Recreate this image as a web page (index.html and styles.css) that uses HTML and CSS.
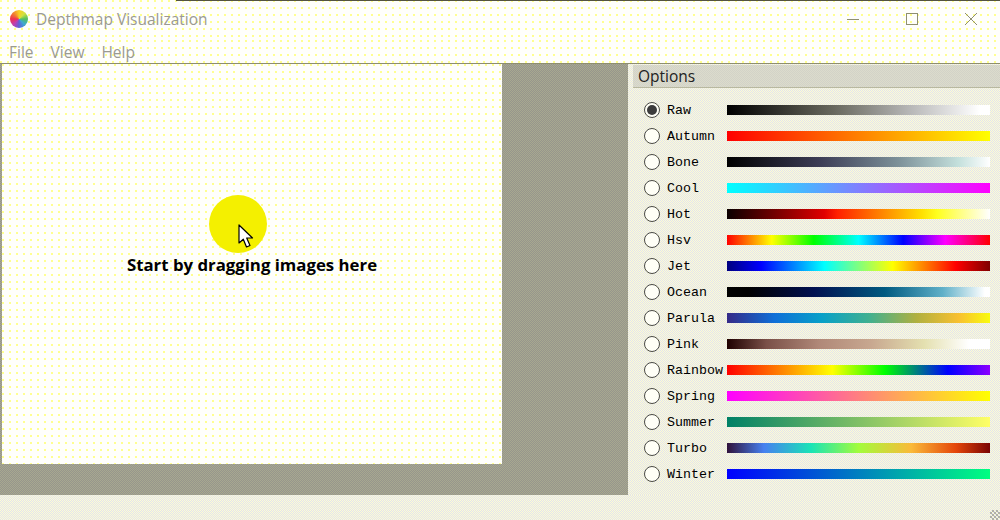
FILE: index.html
```html
<!DOCTYPE html>
<html lang="en">
<head>
<meta charset="utf-8">
<title>Depthmap Visualization</title>
<link rel="stylesheet" href="styles.css">
</head>
<body>
<div class="window">
  <header class="titlebar">
    <span class="app-icon"></span>
    <span class="app-title">Depthmap Visualization</span>
    <div class="win-controls">
      <svg class="win-btn" width="12" height="12" viewBox="0 0 12 12"><path d="M0 6.5H12" stroke="#8f8f70" fill="none"/></svg>
      <svg class="win-btn" width="12" height="12" viewBox="0 0 12 12"><rect x=".5" y=".5" width="11" height="11" stroke="#8f8f70" fill="none"/></svg>
      <svg class="win-btn" width="12" height="12" viewBox="0 0 12 12"><path d="M0 0L12 12M12 0L0 12" stroke="#8f8f70" fill="none"/></svg>
    </div>
  </header>
  <nav class="menubar">
    <span class="menu-item">File</span>
    <span class="menu-item">View</span>
    <span class="menu-item">Help</span>
  </nav>
  <main class="content">
    <section class="viewport">
      <div class="canvas">
        <span class="highlight"></span>
        <svg class="cursor" width="16" height="25" viewBox="0 0 16 25"><path d="M1 1V19L5.300 15.200L8.500 23L12 21.500L8.700 14H14.500Z" fill="#fff" stroke="#000" stroke-width="1.200" stroke-linejoin="round"/></svg>
        <p class="hint">Start by dragging images here</p>
      </div>
    </section>
    <aside class="options">
      <h2 class="options-head">Options</h2>
      <ul class="cmap-list">
        <li class="cmap"><span class="radio checked"></span><span class="cmap-name">Raw</span><span class="bar raw"></span></li>
        <li class="cmap"><span class="radio"></span><span class="cmap-name">Autumn</span><span class="bar autumn"></span></li>
        <li class="cmap"><span class="radio"></span><span class="cmap-name">Bone</span><span class="bar bone"></span></li>
        <li class="cmap"><span class="radio"></span><span class="cmap-name">Cool</span><span class="bar cool"></span></li>
        <li class="cmap"><span class="radio"></span><span class="cmap-name">Hot</span><span class="bar hot"></span></li>
        <li class="cmap"><span class="radio"></span><span class="cmap-name">Hsv</span><span class="bar hsv"></span></li>
        <li class="cmap"><span class="radio"></span><span class="cmap-name">Jet</span><span class="bar jet"></span></li>
        <li class="cmap"><span class="radio"></span><span class="cmap-name">Ocean</span><span class="bar ocean"></span></li>
        <li class="cmap"><span class="radio"></span><span class="cmap-name">Parula</span><span class="bar parula"></span></li>
        <li class="cmap"><span class="radio"></span><span class="cmap-name">Pink</span><span class="bar pink"></span></li>
        <li class="cmap"><span class="radio"></span><span class="cmap-name">Rainbow</span><span class="bar rainbow"></span></li>
        <li class="cmap"><span class="radio"></span><span class="cmap-name">Spring</span><span class="bar spring"></span></li>
        <li class="cmap"><span class="radio"></span><span class="cmap-name">Summer</span><span class="bar summer"></span></li>
        <li class="cmap"><span class="radio"></span><span class="cmap-name">Turbo</span><span class="bar turbo"></span></li>
        <li class="cmap"><span class="radio"></span><span class="cmap-name">Winter</span><span class="bar winter"></span></li>
      </ul>
    </aside>
  </main>
  <footer class="statusbar"><span class="grip"></span></footer>
</div>
</body>
</html>
```
FILE: styles.css
```css
* { box-sizing: border-box; }
html, body { margin: 0; padding: 0; }
body { width: 1000px; height: 520px; overflow: hidden; font-family: "Open Sans", "Noto Sans", sans-serif; }

.window { position: relative; width: 1000px; height: 520px; display: flex; flex-direction: column; }

.titlebar, .menubar, .canvas {
  background-color: #fffffb;
  background-image: radial-gradient(circle at 1px 1px, #ffff90 .8px, transparent .9px);
  background-size: 7px 7px;
}
.titlebar { position: relative; height: 40px; flex: none; display: flex; align-items: center; padding: 0 0 2px 10px; }
.titlebar::before { content: ""; position: absolute; left: 176px; right: 0; top: 0; height: 1px; background: #55553f; }
.app-icon { width: 18px; height: 18px; border-radius: 50%; background: conic-gradient(#f8d020, #d0e040, #50c060, #40a8d0, #6060d8, #c040b0, #f03050, #f08030, #f8d020); }
.app-title { margin-left: 8px; font-size: 15.500px; color: #9a9a92; }
.win-controls { margin-left: auto; display: flex; gap: 47px; padding-right: 23px; }
.win-btn { display: block; }

.menubar { height: 24px; flex: none; display: flex; gap: 17px; padding: 0 0 0 9px; align-items: center; font-size: 15.500px; color: #9a9a92; border-bottom: 1px solid #8e8e6e; }
.menu-item { line-height: 22px; }

.content { flex: 1; display: flex; min-height: 0; }
.viewport { width: 628px; flex: none; padding-left: 2px; background: repeating-conic-gradient(#96968c 0 25%, #a8a890 0 50%) 0 0 / 2px 2px; }
.canvas { position: relative; width: 500px; height: 400px; display: flex; align-items: center; justify-content: center; }
.hint { margin: 0; font-size: 16.800px; font-weight: 700; color: #000; }
.highlight { position: absolute; left: 207px; top: 131px; width: 58px; height: 58px; border-radius: 50%; background: #f4f000; }
.cursor { position: absolute; left: 236px; top: 160px; }

.options { flex: 1; padding: 1px 0 0 5px; background: repeating-conic-gradient(#fdfdd4 0 25%, #e2e2ee 0 50%) 0 0 / 2px 2px; }
.options-head { margin: 0; height: 23px; font-size: 15.500px; font-weight: 400; line-height: 23px; padding-left: 5px; color: #222; background: repeating-conic-gradient(#dcdccc 0 25%, #d2d2c8 0 50%) 0 0 / 2px 2px; border-bottom: 1px solid #b8b8a0; }
.cmap-list { list-style: none; margin: 9px 0 0; padding: 0 10px 0 11px; }
.cmap { height: 26px; display: flex; align-items: center; }
.radio { position: relative; width: 16px; height: 16px; flex: none; border-radius: 50%; border: 1px solid #4a4a44; background: #fffff6; }
.radio.checked::after { content: ""; position: absolute; inset: 2px; border-radius: 50%; background: #3c3c3c; }
.cmap-name { width: 67px; flex: none; padding-left: 7px; font-family: "Liberation Mono", monospace; font-size: 13.300px; line-height: 16px; color: #000; margin-top: 2px; white-space: nowrap; }
.bar { flex: 1; height: 10px; }

.raw { background: linear-gradient(90deg, #000, #66665c 40%, #b8b8b8 70%, #fff 96%); }
.autumn { background: linear-gradient(90deg, #f00, #ff0); }
.bone { background: linear-gradient(90deg, #000, #3c3c55 35%, #7c9098 65%, #c4e0dc 88%, #fff); }
.cool { background: linear-gradient(90deg, #0ff, #f0f); }
.hot { background: linear-gradient(90deg, #0a0000, #e00000 37%, #ff2000 42%, #ffe000 74%, #ffff20 80%, #fff); }
.hsv { background: linear-gradient(90deg, #f00, #ff0 17%, #0f0 33%, #0ff 50%, #00f 67%, #f0f 83%, #f00); }
.jet { background: linear-gradient(90deg, #00007f, #00f 13%, #0ff 37%, #ff0 63%, #f00 87%, #7f0000); }
.ocean { background: linear-gradient(90deg, #007800 -60%, #000 0, #000 8%, #001050 33%, #005a80 60%, #60b0c8 82%, #fff 98%); }
.parula { background: linear-gradient(90deg, #352a87, #0f6fd8 18%, #08a0c8 36%, #40b090 54%, #b0b040 72%, #f8c030 88%, #f9fb0e); }
.pink { background: linear-gradient(90deg, #1e0000, #7a5048 15%, #b08878 35%, #c8a890 55%, #e4e0b0 75%, #fff 92%); }
.rainbow { background: linear-gradient(90deg, #f00, #ff0 40%, #0f0 60%, #00f 84%, #8b00ff); }
.spring { background: linear-gradient(90deg, #f0f, #ff0); }
.summer { background: linear-gradient(90deg, #008066, #ffff66); }
.turbo { background: linear-gradient(90deg, #30123b, #4680f0 14%, #1ae4b6 32%, #a2fc3c 50%, #faba39 70%, #e4460a 87%, #7a0403); }
.winter { background: linear-gradient(90deg, #00f, #00ff80); }

.statusbar { height: 25px; flex: none; position: relative; background: repeating-conic-gradient(#fdfdd4 0 25%, #e2e2ee 0 50%) 0 0 / 2px 2px; }
.grip { position: absolute; right: 0; bottom: 0; width: 10px; height: 10px; background: repeating-conic-gradient(#b0b0a8 0 25%, transparent 0 50%) 0 0 / 4px 4px; }
```
